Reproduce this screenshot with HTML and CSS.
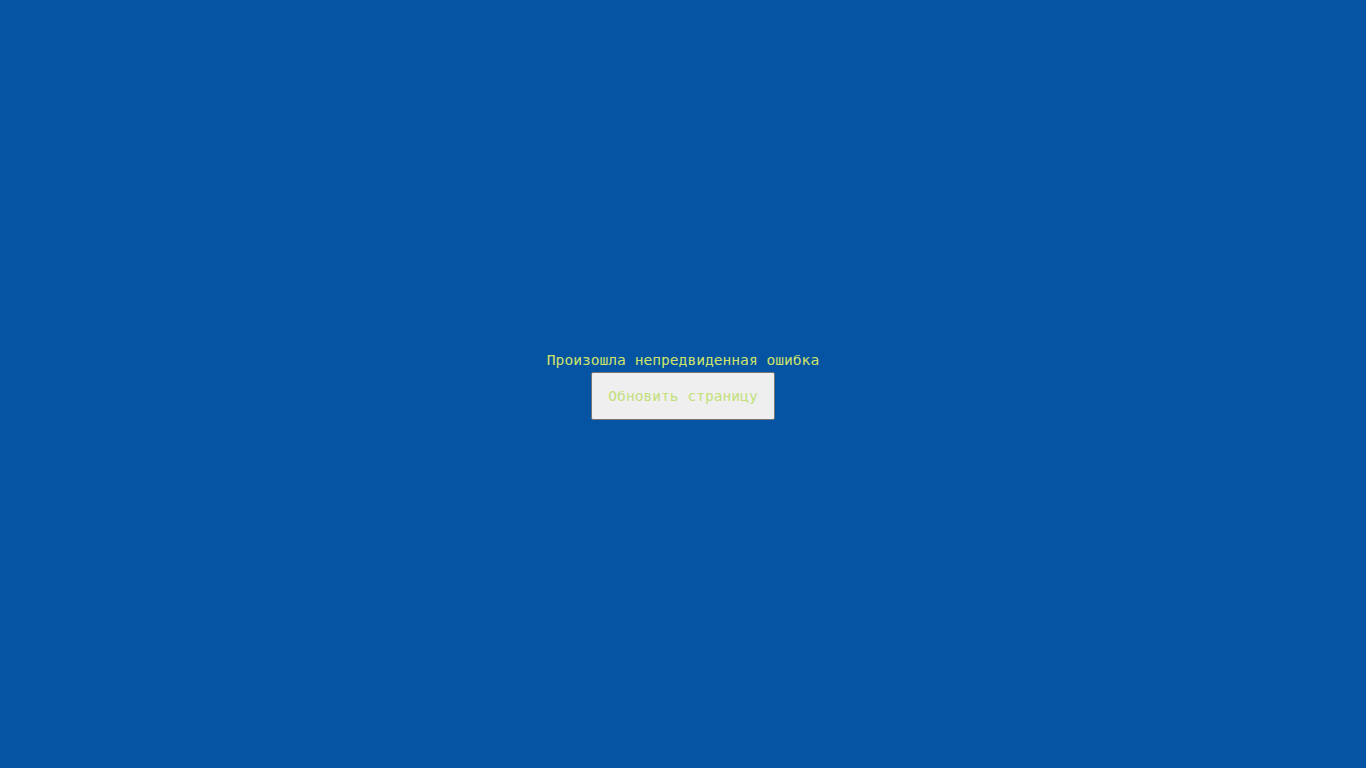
FILE: index.html
```html
<!DOCTYPE html>
<html lang="ru">
<head>
<meta charset="utf-8">
<title>Ошибка</title>
<link rel="stylesheet" href="styles.css">
</head>
<body>
<main class="error">
  <p class="error-message">Произошла непредвиденная ошибка</p>
  <button class="reload-btn" type="button">Обновить страницу</button>
</main>
</body>
</html>
```

FILE: styles.css
```css
html, body {
  margin: 0;
  padding: 0;
  height: 100%;
}
body {
  background: #0553a3;
  font-family: "DejaVu Sans Mono", "Liberation Mono", monospace;
  font-size: 14.6px;
}
.error {
  height: 100%;
  display: flex;
  flex-direction: column;
  align-items: center;
  justify-content: center;
  gap: 4px;
  padding-top: 3px;
  box-sizing: border-box;
}
.error-message {
  margin: 0;
  line-height: 17px;
  color: #cde36a;
}
.reload-btn {
  font-family: inherit;
  font-size: 14.6px;
  line-height: 17px;
  white-space: nowrap;
  padding: 14px 16px 15px;
  background: #efefef;
  border: 1px solid #767676;
  border-radius: 2px;
  color: #c3df7a;
  cursor: pointer;
}
```
